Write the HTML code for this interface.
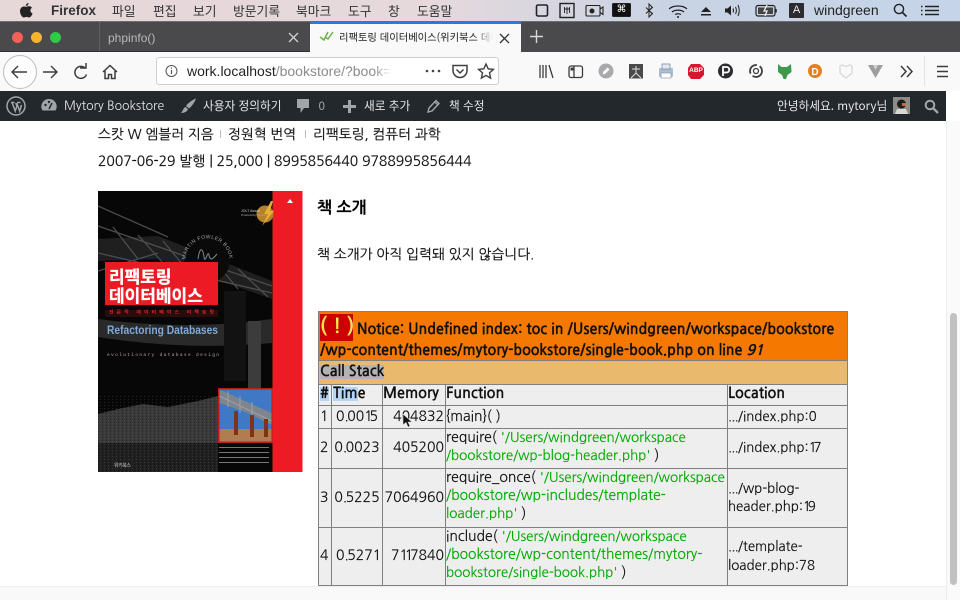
<!DOCTYPE html>
<html lang="ko"><head><meta charset="utf-8"><title>리팩토링 데이터베이스</title>
<style>
html,body{margin:0;padding:0;width:960px;height:600px;overflow:hidden;background:#fff}
body{position:relative;font-family:"NanumGothic","Noto Sans CJK KR",sans-serif;color:#111}
.a{position:absolute;white-space:nowrap}
svg{position:absolute;overflow:visible}
.mb{font:12.8px/21px "Noto Sans CJK KR",sans-serif;color:#333;top:0}
.adm{font:11.7px/30px "Noto Sans CJK KR","Liberation Sans",sans-serif;color:#e4e5e6;top:91px}
.t{font-size:13.8px;line-height:20px;color:#111;-webkit-text-stroke:.2px #111}
.c{position:absolute;box-sizing:border-box;background:#eee;border:1px solid #808080;font:14px/18.2px "NanumGothic",sans-serif;color:#111;padding:0 1px;overflow:hidden;-webkit-text-stroke:.15px #111}
.p0{padding-left:0}
.h{font-size:14.5px;font-weight:700;line-height:18px}
.v{display:flex;align-items:center}
.f{white-space:nowrap;padding-left:0}
.l{font-size:13.3px;padding-left:0}
.g{color:#0a0;font-size:13.4px;-webkit-text-stroke:.15px #0a0}
.g2{font-size:13.9px}
.n{letter-spacing:-3.2px}
.d{letter-spacing:-1.5px}
.e{letter-spacing:-.7px}
</style></head><body>

<!-- menu bar -->
<div class="a" style="left:0;top:0;width:960px;height:21px;background:linear-gradient(90deg,#e6d8d8 0,#e5d9dc 45%,#c9d3e4 70%,#c5d4e8 100%)"></div>
<svg style="left:19px;top:3px" width="14" height="15" viewBox="0 0 14 15"><path d="M9.500 0c.1 1.500-1.100 3-2.700 3C6.700 1.600 8 .2 9.500 0zM7 3.800c.8 0 1.700-.7 3-.7 1 0 2.200.5 3 1.600-2.400 1.500-2 4.700.6 5.800-.6 1.500-2 4-3.400 4-1 0-1.500-.6-2.600-.6s-1.700.6-2.600.6C3.300 14.500 1 11.300 1 8.200c0-2.900 1.900-4.700 3.800-4.700 1 0 1.700.3 2.200.3z" fill="#222"/></svg>
<div class="a mb" style="left:51px;font-weight:700;font-family:'Liberation Sans',sans-serif;font-size:13.500px;color:#333">Firefox</div>
<div class="a mb" style="left:112px">파일</div>
<div class="a mb" style="left:153px">편집</div>
<div class="a mb" style="left:193px">보기</div>
<div class="a mb" style="left:233px">방문기록</div>
<div class="a mb" style="left:296px">북마크</div>
<div class="a mb" style="left:348px">도구</div>
<div class="a mb" style="left:388px">창</div>
<div class="a mb" style="left:417px">도움말</div>

<svg style="left:530px;top:0" width="430" height="21" viewBox="530 0 430 21" fill="none" stroke="#222">
<rect x="536.500" y="5" width="11" height="11" rx="1.500" stroke-width="1.600"/>
<rect x="560" y="3.500" width="14" height="14" stroke-width="1.400"/><path d="M564.500 7v6M567 7v7M569.500 7v6M564 9h6" stroke-width=".9"/>
<rect x="586" y="5.500" width="14" height="10.500" rx="1" stroke-width="1.100"/><circle cx="592" cy="11" r="2" fill="#222"/><path d="M600 9l3-2v7.500l-3-2" stroke-width="1.100"/>
<rect x="612.500" y="3.500" width="18" height="13" rx="1" fill="#111"/>
<path d="M649 4l3.500 3.500-3.500 3 3.500 3-3.500 3.500V4zM646 7.500l6 6M646 13.500l6-6" stroke-width="1"/>
<path d="M669 9c4-4 14-4 18 0M672 12c3-2.500 9-2.500 12 0M675 14.500c2-1 4-1 6 0" stroke-width="1.200"/><circle cx="678" cy="17" r="1" fill="#222" stroke="none"/>
<path d="M706 7l5 5h-10zM701 14h10v1.500h-10z" fill="#222" stroke="none"/>
<path d="M725 8.500h2.500l3.500-3v10l-3.500-3H725z" fill="#222" stroke="none"/><path d="M733 8.500q1 2 0 4M735.500 7q1.800 3.500 0 7M738 5q2.500 5.500 0 11" stroke-width="1"/>
<rect x="756" y="5.500" width="19" height="10.500" rx="2" stroke-width="1.200"/><rect x="758" y="7.500" width="15" height="6.500" fill="#444" stroke="none"/><path d="M767 5l-3 6h3l-2 5" stroke="#eee" stroke-width="1.300"/><path d="M776 9v3.500" stroke-width="1.500"/>
<rect x="789" y="3" width="15" height="15" rx="1" fill="#2c2c30" stroke="none"/>
<circle cx="899" cy="9" r="4.600" stroke-width="1.400"/><path d="M902.500 12.500l4 4" stroke-width="1.600"/>
<path d="M921 6.500h1.500M921 10.500h1.500M921 14.500h1.500M925 6.500h14M925 10.500h14M925 14.500h14" stroke-width="1.400"/>
</svg>
<div class="a" style="left:612px;top:3px;width:19px;height:14px;font:10px/14px 'DejaVu Sans',sans-serif;color:#fff;text-align:center">⌘</div>
<div class="a" style="left:789px;top:3px;width:15px;height:15px;font:11px/15px 'Liberation Sans',sans-serif;color:#eee;text-align:center">A</div>
<div class="a mb" style="left:814px;font-family:'Liberation Sans',sans-serif;font-size:14px;color:#222">windgreen</div>

<!-- tab strip -->
<div class="a" style="left:0;top:21px;width:960px;height:31px;background:#4a4a4d"></div>
<div class="a" style="left:0;top:21px;width:960px;height:1px;background:#6d6d70"></div>
<div class="a" style="left:99px;top:22px;width:1px;height:30px;background:#616164"></div>
<div class="a" style="left:0;top:51px;width:310px;height:1px;background:#2e2e30"></div>
<div class="a" style="left:12px;top:32px;width:11px;height:11px;border-radius:50%;background:#f4605a"></div>
<div class="a" style="left:31px;top:32px;width:11px;height:11px;border-radius:50%;background:#f5b42f"></div>
<div class="a" style="left:50px;top:32px;width:11px;height:11px;border-radius:50%;background:#2fcb47"></div>
<div class="a" style="left:108px;top:28px;font:12px/20px 'Liberation Sans',sans-serif;color:#b8b8ba">phpinfo()</div>
<svg style="left:288px;top:32px" width="11" height="11" fill="none" stroke="#d0d0d2" stroke-width="1.300"><path d="M1 1l9 9M10 1l-9 9"/></svg>
<div class="a" style="left:310px;top:22px;width:211px;height:31px;background:#f9f9fa;border-top:2px solid #2f78d8;box-sizing:border-box"></div>
<svg style="left:319px;top:31px" width="16" height="12" fill="none" stroke="#6bb344" stroke-width="1.500"><path d="M1 6l4 3 4-8M6 6l3 2 5-7"/></svg>
<div class="a" style="left:339px;top:27px;width:154px;overflow:hidden;font:10.300px/20px 'Noto Sans CJK KR',sans-serif;color:#222;-webkit-mask-image:linear-gradient(90deg,#000 88%,transparent)">리팩토링 데이터베이스(위키북스 데이터베이스</div>
<svg style="left:499px;top:33px" width="11" height="11" fill="none" stroke="#333" stroke-width="1.300"><path d="M1 1l9 9M10 1l-9 9"/></svg>
<svg style="left:530px;top:30px" width="13" height="13" fill="none" stroke="#d8d8da" stroke-width="1.400"><path d="M6.500 0v13M0 6.500h13"/></svg>

<!-- toolbar -->
<div class="a" style="left:0;top:52px;width:960px;height:39px;background:#f9f9fa"></div>
<div class="a" style="left:3px;top:55px;width:32px;height:32px;border-radius:50%;background:#fdfdfd;border:1px solid #bdbdbf"></div>
<svg style="left:0;top:52px" width="960" height="39" viewBox="0 52 960 39" fill="none" stroke="#3c3c3e" stroke-width="1.400">
<path d="M12 72h15M18 66l-6 6 6 6"/>
<path d="M43 72h14M51 66l6 6-6 6"/>
<path d="M85.500 68.500a6 6 0 1 0 1 6M80 68h6v-5" stroke-width="1.500"/>
<path d="M103 72l7-6.500 7 6.500M105 71v7.500h3.500v-4h3v4h3.500V71" stroke-width="1.500"/>
<path d="M540 65v13M543 65v13M546 65v13M549 65l4 13" stroke-width="1.300"/>
<rect x="569" y="66" width="13.500" height="11.500" rx="2" stroke-width="1.300"/><path d="M574 66v11.500" stroke-width="1.300"/><path d="M570.500 67.500h3v3h-3z" fill="#3c3c3e" stroke="none"/>
<path d="M907 66l5 5.500-5 5.500M901 66l5 5.500-5 5.500" stroke-width="1.500"/>
<path d="M937 66.500h11M937 71.500h11M937 76.500h11" stroke-width="1.400"/>
</svg>
<div class="a" style="left:923.500px;top:56px;width:1px;height:30px;background:#e2e2e4"></div>

<!-- url bar -->
<div class="a" style="left:156px;top:57px;width:343px;height:28px;box-sizing:border-box;background:#fff;border:1px solid #d0d0d2;border-radius:3px"></div>
<svg style="left:165px;top:64px" width="14" height="14" fill="none" stroke="#555"><circle cx="6.500" cy="7" r="5.500"/><path d="M6.500 6v4M6.500 3.500v1.200" stroke-width="1.200"/></svg>
<div class="a" style="left:187px;top:60px;width:205px;overflow:hidden;font:14px/22px 'Liberation Sans',sans-serif;color:#222;-webkit-mask-image:linear-gradient(90deg,#000 91%,transparent)">work.localhost<span style="color:#8b8b8f">/bookstore/?book=리팩토링</span></div>
<svg style="left:420px;top:60px" width="76" height="22" fill="none" stroke="#3f3f41" stroke-width="1.300">
<circle cx="7" cy="11" r="1.300" fill="#444" stroke="none"/><circle cx="13" cy="11" r="1.300" fill="#444" stroke="none"/><circle cx="19" cy="11" r="1.300" fill="#444" stroke="none"/>
<path d="M33 5.500h14v5a7 7 0 0 1-14 0zM36.500 9.500l3.500 3.500 3.500-3.500" stroke-width="1.500"/>
<path d="M66 4l2.200 4.800 5.200.6-3.900 3.500 1.100 5.200-4.600-2.700-4.600 2.700 1.100-5.200-3.900-3.500 5.200-.6z" stroke-width="1.400"/>
</svg>

<!-- extension icons -->
<svg style="left:590px;top:56px" width="320" height="32" viewBox="590 56 320 32">
<circle cx="606" cy="71" r="7.500" fill="#a9a9ab"/><path d="M602.500 74.500l1-3 4-4 2 2-4 4z" fill="#fff"/>
<rect x="629" y="64" width="14" height="14.500" fill="#4a4a4a"/><path d="M636 66v7M631 78l5-5 5 5M632 69h8" stroke="#ddd" stroke-width="1" fill="none"/>
<rect x="659" y="68" width="14" height="9" rx="1" fill="#a9bdd4"/><rect x="662" y="64" width="8" height="5" fill="#e4e8ee" stroke="#7e8ea4" stroke-width=".8"/><rect x="661" y="73" width="10" height="5" fill="#fff" stroke="#8a97a8" stroke-width=".7"/>
<polygon points="691,64 700,64 704,68 704,75 700,79 691,79 688,75 688,68" fill="#d8162e"/>
<circle cx="725.500" cy="71" r="7.500" fill="#2d2d2f"/><path d="M723 76v-9h3.500a2.600 2.600 0 0 1 0 5.500H723" fill="none" stroke="#fff" stroke-width="1.800"/>
<circle cx="756" cy="71" r="6" fill="none" stroke="#3f3f41" stroke-width="1.800" stroke-dasharray="13 3"/><circle cx="756" cy="71" r="2.500" fill="none" stroke="#3f3f41" stroke-width="1.300"/>
<path d="M778 64l3.500 3h5.500l4-3 .5 8-4 3-1.500 4h-2.500l-1.500-4-4-3z" fill="#3c9a4a"/>
<circle cx="815" cy="71" r="7" fill="#e4801e"/><text x="815" y="75" font-family="Liberation Sans" font-weight="700" font-size="10" fill="#fff" text-anchor="middle">D</text>
<path d="M842 65l4 1.500 4-1.500 2 1v7l-6 5-6-5v-7z" fill="none" stroke="#dcdcde" stroke-width="1.500"/>
<path d="M868 65h15l-7.500 13z" fill="#9d9d9f"/><path d="M873 65h5l-2.500 5z" fill="#d0d0d2"/>
</svg>
<div class="a" style="left:688px;top:66px;width:16px;font:700 6.500px/10px 'Liberation Sans',sans-serif;color:#fff;text-align:center">ABP</div>

<!-- admin bar -->
<div class="a" style="left:0;top:91px;width:946px;height:30px;background:#23282d"></div>
<svg style="left:6px;top:96px" width="20" height="20" fill="none" stroke="#a0a5aa"><circle cx="10" cy="10" r="9" stroke-width="1.500"/><path d="M5 6.500h3.500M11 6.500h3.500M6.200 7l3 8 1.700-5-1.200-3M10.700 7l3 8 1.800-6" stroke-width="1.500"/></svg>
<svg style="left:41px;top:98px" width="16" height="15"><path d="M8 1a7.500 7.500 0 0 0-6.500 11.500h13A7.500 7.500 0 0 0 8 1z" fill="#a0a5aa"/><path d="M8 11l3-6" stroke="#23282d" stroke-width="1.500"/><circle cx="4.500" cy="7" r="1.200" fill="#23282d"/><circle cx="8" cy="4" r="1.200" fill="#23282d"/></svg>
<div class="a adm" style="left:64px;font-size:12.300px;font-family:'NanumGothic',sans-serif">Mytory Bookstore</div>
<svg style="left:180px;top:98px" width="17" height="17"><path d="M16 0.500C12 2 8 5 6 8l3 2.500C12 8 14.500 4.500 16 .5zM5.500 9c-2 .5-2 3-4.500 6 3.500 0 6.500-1.500 7-4z" fill="#a0a5aa"/></svg>
<div class="a adm" style="left:203px">사용자 정의하기</div>
<svg style="left:296px;top:99px" width="14" height="15"><path d="M1 0h12v9H8l-3.500 5V9H1z" fill="#a0a5aa"/></svg>
<div class="a adm" style="left:318.500px;color:#9ea3a8">0</div>
<svg style="left:343px;top:100px" width="13" height="13"><path d="M5 0h3v5h5v3H8v5H5V8H0V5h5z" fill="#a0a5aa"/></svg>
<div class="a adm" style="left:364px">새로 추가</div>
<svg style="left:427px;top:99px" width="14" height="14" fill="none" stroke="#a0a5aa" stroke-width="1.400"><path d="M1 13l1-4 7-7.500 3 3L5 12zM8 3l3 3"/></svg>
<div class="a adm" style="left:449px">책 수정</div>
<div class="a adm" style="left:777px">안녕하세요. mytory님</div>
<svg style="left:893px;top:97px" width="17" height="17"><rect width="17" height="17" fill="#8d8d88"/><circle cx="8.500" cy="7" r="4.500" fill="#1c1c1c"/><path d="M2 17l2-5h9l2 5z" fill="#d8d8d4"/><rect x="9" y="6" width="4" height="3" fill="#c96a3a"/></svg>
<svg style="left:924px;top:99px" width="15" height="15" fill="none" stroke="#a0a5aa"><circle cx="6" cy="6" r="4.300" stroke-width="2"/><path d="M9.500 9.500l4.500 4.500" stroke-width="2.400"/></svg>

<!-- page text -->
<div class="a t" style="left:98px;top:124px;font-size:13.700px">스캇 W 엠블러 지음</div>
<div class="a" style="left:220px;top:130px;width:1px;height:8px;background:#bbb"></div>
<div class="a t" style="left:228px;top:124px;font-size:13.700px">정원혁 번역</div>
<div class="a" style="left:305px;top:130px;width:1px;height:8px;background:#bbb"></div>
<div class="a t" style="left:313px;top:124px;font-size:13.700px">리팩토링, 컴퓨터 과학</div>
<div class="a t" style="left:98px;top:152px;font-size:13.900px">2007-06-29 발행 | 25,000 | 8995856440 9788995856444</div>

<!-- cover -->
<svg style="left:98px;top:191px" width="204" height="281" viewBox="0 0 204 281">
<defs><pattern id="nz" width="4" height="3" patternUnits="userSpaceOnUse"><rect width="1" height="1" fill="#000" opacity=".35"/><rect x="2" y="1" width="1" height="1" fill="#666" opacity=".3"/></pattern></defs>
<rect width="204" height="281" fill="#070707"/>
<path d="M0 48L60 45L174 90V108L60 68L0 70z" fill="#1f1f1f"/>
<path d="M0 35L174 95M0 62L174 102M0 15L70 46M15 36L40 68M40 44L65 72M65 50L90 80M90 60L115 90M115 68L140 98M140 78L170 106M0 80L60 62" stroke="#4c4c4c" stroke-width="1.300" fill="none"/>
<path d="M0 128Q90 140 174 128V152Q90 160 0 146z" fill="#2a2a2a"/>
<rect x="150" y="130" width="13" height="68" fill="#3c3c3c"/>
<rect x="126" y="100" width="22" height="90" fill="#121212"/>
<path d="M0 223L20 218L45 213L70 216L100 210L120 205V252H0z" fill="#3a3a3a"/>
<path d="M0 252H120V281H0z" fill="#202020"/>
<rect y="205" width="120" height="76" fill="url(#nz)"/>
<rect x="174.500" y="0" width="30" height="281" fill="#ed1c24"/>
<path d="M192 8l3 4h-6z" fill="#fff"/>
<circle cx="167" cy="23" r="8.500" fill="#b5812a"/><path d="M173 10l-7 13h4l-6 12 12-15h-4l3-10z" fill="#e8b030"/>
<text x="143" y="21" font-family="Liberation Sans" font-size="3.500" fill="#ccc">JOLT Award</text>
<text x="143" y="25" font-family="Liberation Sans" font-size="3" fill="#aaa">Productivity Winner</text>
<circle cx="109" cy="69" r="23" fill="#0a0a0a"/>
<path id="ring" d="M88 74a22 22 0 1 1 43 0" fill="none"/>
<text font-family="Liberation Sans" font-size="5" fill="#a8a8a8" letter-spacing=".5"><textPath href="#ring">A MARTIN FOWLER BOOK</textPath></text>
<path d="M100 68c2-14 5-10 6-2s4-8 5-2 3 5 8-1" stroke="#888" stroke-width="1" fill="none"/>
<rect x="7" y="71" width="113" height="43" fill="#ec1a24"/>
<rect x="7" y="119" width="113" height="7" fill="#2a0c0e"/>
<text x="11" y="122.500" font-family="Noto Sans CJK KR" font-weight="700" font-size="4.800" fill="#d8262c" textLength="105">전문적 데이터베이스 리팩토링</text>
<rect x="120" y="197" width="54.500" height="55" fill="#b81e18"/>
<rect x="121.500" y="198.500" width="52" height="52" fill="#3f78c4"/>
<path d="M121.500 198.500L173.500 222V234L150 222L121.500 212z" fill="#7e858c"/>
<path d="M121.500 205L173.500 230M130 200V216M142 205V222M154 211V226" stroke="#a4a9ae" stroke-width=".8" fill="none"/>
<rect x="121.500" y="238" width="52" height="12.500" fill="#b07c50"/>
<rect x="136" y="220" width="4" height="24" fill="#7e3416"/><rect x="152" y="224" width="4" height="22" fill="#7e3416"/><rect x="166" y="228" width="4" height="18" fill="#7e3416"/>
<rect x="121" y="256" width="50" height="1" fill="#777"/><rect x="121" y="261" width="50" height="1" fill="#777"/><rect x="121" y="266" width="50" height="1" fill="#777"/><rect x="121" y="271" width="50" height="1" fill="#777"/>
<text x="9" y="165" font-family="Liberation Mono" font-size="4.500" fill="#bba0a0" textLength="112">evolutionary database design</text>
<text x="11" y="92" font-family="Noto Sans CJK KR" font-weight="700" font-size="17" fill="#fff" stroke="#fff" stroke-width=".3">리팩토링</text>
<text x="11" y="111" font-family="Noto Sans CJK KR" font-weight="700" font-size="17" fill="#fff" stroke="#fff" stroke-width=".3">데이터베이스</text>
<text x="9" y="143" font-family="Liberation Sans" font-weight="700" font-size="12" fill="#7fa9d6" textLength="111" lengthAdjust="spacingAndGlyphs">Refactoring Databases</text>
<text x="16" y="276" font-family="Noto Sans CJK KR" font-size="5" fill="#ccc" textLength="17">위키북스</text>
</svg>

<div class="a" style="left:317px;top:199px;font-size:16px;line-height:20px;font-weight:700;color:#000;-webkit-text-stroke:.2px #000">책 소개</div>
<div class="a t" style="left:317px;top:244px;font-size:13.750px">책 소개가 아직 입력돼 있지 않습니다.</div>

<!-- xdebug table -->
<div class="a" style="left:318px;top:311px;width:530px;height:275px;background:#808080"></div>
<div class="c" style="left:318px;top:311px;width:530px;height:50px;background:#f57900;font-size:14.400px;font-weight:700;line-height:21px;padding:8px 1px 0;white-space:nowrap;-webkit-text-stroke:.2px #111;border-width:1px 1px 0"><span style="position:absolute;left:1px;top:2px;width:33px;height:27px;background:#cc0000;color:#fce94f;font-size:20px;line-height:25px;text-align:center;-webkit-text-stroke:0">( ! )</span><span style="margin-left:37px">Notice: Undefined index: toc in /Users/windgreen/workspace/bookstore</span><br>/wp-content/themes/mytory-bookstore/single-book.php on line <i>91</i></div>
<div class="c h" style="left:318px;top:360px;width:530px;height:25px;background:#e9b96e;line-height:22px"><span style="background:#b3b3b3">Call Stack</span></div>

<div class="c h" style="left:318px;top:384px;width:14px;height:22px"><span style="background:#b5d5f5">#</span></div>
<div class="c h" style="left:331px;top:384px;width:52px;height:22px"><span style="background:#b5d5f5">Tim</span>e</div>
<div class="c h p0" style="left:382px;top:384px;width:64px;height:22px">Memory</div>
<div class="c h p0" style="left:445px;top:384px;width:283px;height:22px">Function</div>
<div class="c h p0" style="left:727px;top:384px;width:121px;height:22px">Location</div>

<div class="c v" style="left:318px;top:405px;width:14px;height:24px">1</div>
<div class="c v" style="left:331px;top:405px;width:52px;height:24px;justify-content:center"><span>0<span class="d">.</span>00<span class="n">1</span>5</span></div>
<div class="c v" style="left:382px;top:405px;width:64px;height:24px;justify-content:flex-end">404832</div>
<div class="c v p0" style="left:445px;top:405px;width:283px;height:24px">{main}( )</div>
<div class="c v l" style="left:727px;top:405px;width:121px;height:24px"><span><span class="e">...</span>/index.php:0</span></div>

<div class="c v" style="left:318px;top:428px;width:14px;height:41px">2</div>
<div class="c v" style="left:331px;top:428px;width:52px;height:41px;justify-content:center"><span>0<span class="d">.</span>0023</span></div>
<div class="c v" style="left:382px;top:428px;width:64px;height:41px;justify-content:flex-end">405200</div>
<div class="c f" style="left:445px;top:428px;width:283px;height:41px">require( <span class="g">'/Users/windgreen/workspace<br>/bookstore/wp-blog-header.php'</span> )</div>
<div class="c v l" style="left:727px;top:428px;width:121px;height:41px"><span><span class="e">...</span>/index.php:<span class="n">1</span>7</span></div>

<div class="c v" style="left:318px;top:468px;width:14px;height:60px">3</div>
<div class="c v" style="left:331px;top:468px;width:52px;height:60px;justify-content:center"><span>0<span class="d">.</span>5225</span></div>
<div class="c v" style="left:382px;top:468px;width:64px;height:60px;justify-content:flex-end">7064960</div>
<div class="c f" style="left:445px;top:468px;width:283px;height:60px">require_once( <span class="g">'/Users/windgreen/workspace<br><span class="g2">/bookstore/wp-includes/template-</span><br>loader.php'</span> )</div>
<div class="c v l" style="left:727px;top:468px;width:121px;height:60px"><span><span class="e">...</span>/wp-blog-<br>header.php:<span class="n">1</span>9</span></div>

<div class="c v" style="left:318px;top:527px;width:14px;height:59px">4</div>
<div class="c v" style="left:331px;top:527px;width:52px;height:59px;justify-content:center"><span>0<span class="d">.</span>527<span class="n">1</span></span></div>
<div class="c v" style="left:382px;top:527px;width:64px;height:59px;justify-content:flex-end"><span>7<span class="n">1</span><span class="n">1</span>7840</span></div>
<div class="c f" style="left:445px;top:527px;width:283px;height:59px">include( <span class="g">'/Users/windgreen/workspace<br><span class="g2">/bookstore/wp-content/themes/mytory-</span><br>bookstore/single-book.php'</span> )</div>
<div class="c v l" style="left:727px;top:527px;width:121px;height:59px"><span><span class="e">...</span>/template-<br>loader.php:78</span></div>

<svg style="left:402px;top:413px" width="11" height="16"><path d="M1 1v11l3-2.500 2 4.500 2-1-2-4h4z" fill="#111" stroke="#ddd" stroke-width=".6"/></svg>

<!-- scrollbar + bottom -->
<div class="a" style="left:946px;top:121px;width:14px;height:479px;background:#fafafa;border-left:1px solid #ededed;box-sizing:border-box"></div>
<div class="a" style="left:950px;top:313px;width:7px;height:272px;border-radius:4px;background:#c1c1c1"></div>
<div class="a" style="left:0;top:586px;width:946px;height:14px;background:#f9f9f9;border-top:1px solid #eee;box-sizing:border-box"></div>
</body></html>
